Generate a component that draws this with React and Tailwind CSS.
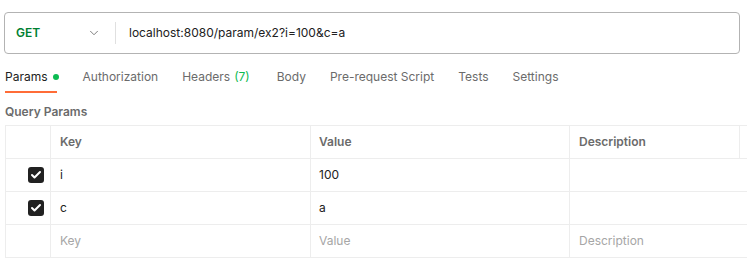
import { ChevronDown, Check } from 'lucide-react';

const tabs = [
  { label: 'Authorization' },
  { label: 'Headers', count: '(7)' },
  { label: 'Body' },
  { label: 'Pre-request Script' },
  { label: 'Tests' },
  { label: 'Settings' },
];

const rows = [
  { key: 'i', value: '100' },
  { key: 'c', value: 'a' },
];

function CheckBox() {
  return (
    <span className="flex h-4 w-4 items-center justify-center rounded-[3px] bg-[#212121]">
      <Check className="h-3 w-3 text-white" strokeWidth={4} />
    </span>
  );
}

export default function App() {
  return (
    <div className="h-[274px] w-[747px] overflow-hidden bg-white font-['Inter',sans-serif] text-[12px]">
      {/* URL bar */}
      <div className="ml-[4px] mt-[12px] flex h-[42px] w-[736px] items-center rounded-[4px] border border-[#b3b3b3]">
        <span className="ml-[11px] w-[60px] font-semibold text-[#007f31]">GET</span>
        <ChevronDown className="ml-[11px] h-[14px] w-[14px] text-[#6b6b6b]" strokeWidth={1.5} />
        <span className="ml-[14px] h-[22px] w-px bg-[#e0e0e0]" />
        <span className="ml-[13px] text-[#212121]">localhost:8080/param/ex2?i=100&amp;c=a</span>
      </div>

      {/* Tabs */}
      <div className="ml-[5px] mt-[14px] flex h-[25px] items-start gap-[24px] text-[#6b6b6b]">
        <div className="flex h-[25px] flex-col">
          <div className="flex items-center gap-[5px] text-[#212121]">
            Params
            <span className="h-[6px] w-[6px] rounded-full bg-[#0cbb52]" />
          </div>
          <div className="mt-auto h-[2px] w-[52px] bg-[#ff6c37]" />
        </div>
        {tabs.map((t) => (
          <div key={t.label} className={`flex items-center gap-[4px] ${t.count ? 'pr-[3px]' : ''}`}>
            {t.label}
            {t.count && <span className="text-[#0cbb52]">{t.count}</span>}
          </div>
        ))}
      </div>

      {/* Query params */}
      <div className="ml-[5px] mt-[10px] font-semibold text-[#6b6b6b]">Query Params</div>

      <div className="ml-[5px] mt-[4px] w-[900px] border-l border-t border-[#ededed]">
        <div className="flex h-[33px] border-b border-[#ededed] font-semibold text-[#6b6b6b]">
          <div className="w-[45px] border-r border-[#ededed]" />
          <div className="flex w-[260px] items-center border-r border-[#ededed] pl-[9px]">Key</div>
          <div className="flex w-[259px] items-center border-r border-[#ededed] pl-[8px]">Value</div>
          <div className="flex w-[170px] items-center border-r border-[#ededed] pl-[9px]">Description</div>
        </div>
        {rows.map((r) => (
          <div key={r.key} className="flex h-[33px] border-b border-[#ededed] text-[#212121]">
            <div className="flex w-[45px] items-center justify-end border-r border-[#ededed] pr-[6px]">
              <CheckBox />
            </div>
            <div className="flex w-[260px] items-center border-r border-[#ededed] pl-[9px]">{r.key}</div>
            <div className="flex w-[259px] items-center border-r border-[#ededed] pl-[8px]">{r.value}</div>
            <div className="w-[170px]" />
          </div>
        ))}
        <div className="flex h-[33px] border-b border-[#ededed] text-[#a6a6a6]">
          <div className="w-[45px] border-r border-[#ededed]" />
          <div className="flex w-[260px] items-center border-r border-[#ededed] pl-[9px]">Key</div>
          <div className="flex w-[259px] items-center border-r border-[#ededed] pl-[8px]">Value</div>
          <div className="flex w-[170px] items-center pl-[9px]">Description</div>
        </div>
      </div>
    </div>
  );
}
